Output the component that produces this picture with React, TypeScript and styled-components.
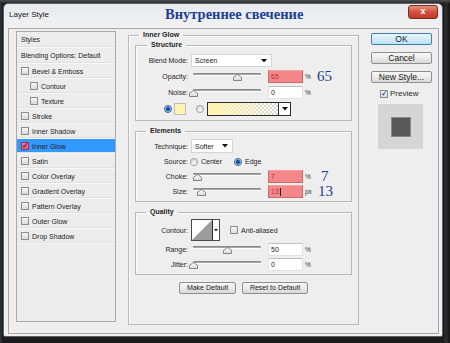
import styled, { createGlobalStyle } from "styled-components";

const GlobalStyle = createGlobalStyle`
	html, body { margin: 0; padding: 0; }
	body {
		background: #161616;
		font-family: "Liberation Sans", Arial, sans-serif;
		color: #1e1e1e;
	}
`;

const Backdrop = styled.div`
	width: 450px;
	height: 343px;
	box-sizing: border-box;
	padding: 3px 0 0 3px;
	overflow: hidden;
	background:
		linear-gradient(#4e4e4e, #2c2c2c 3px, transparent 3px),
		linear-gradient(90deg, #2b3844 0, #1b1b1b 3px, #1b1b1b 443px, #2e2e2e 446px, #141414);
`;

const Window = styled.div`
	width: 440px;
	height: 334px;
	box-sizing: border-box;
	border: 1px solid #5d6169;
	border-radius: 5px 5px 2px 2px;
	background: linear-gradient(#e7eaee, #f1f1f1 24px);
	display: flex;
	flex-direction: column;
`;

const TitleBar = styled.div`
	height: 24px;
	box-sizing: border-box;
	flex: none;
	display: grid;
	grid-template-columns: 156px 1fr auto;
	align-items: center;
	padding: 0 4px 4px 5px;
`;

const Caption = styled.span`
	font-size: 8px;
	color: #1a1a1a;
`;

const Heading = styled.h1`
	margin: 0;
	font-family: "Liberation Serif", "DejaVu Serif", serif;
	font-weight: bold;
	font-size: 14.5px;
	color: #1c3f94;
	line-height: 1;
`;

const CloseButton = styled.div`
	align-self: start;
	margin-top: 1px;
	width: 30px;
	height: 14px;
	box-sizing: border-box;
	border: 1px solid #7a2a22;
	border-radius: 3px;
	background: linear-gradient(#e8907f, #d1513f 50%, #c03a2a);
	color: #fff;
	font-weight: bold;
	font-size: 9px;
	line-height: 11px;
	text-align: center;
`;

const Body = styled.div`
	height: 306px;
	box-sizing: border-box;
	margin: 0 3px 0 4px;
	border: 1px solid #a8a8a8;
	background: #eeeeee;
	display: flex;
	align-items: flex-start;
`;

const StylesPanel = styled.div`
	margin: 2px 0 0 7px;
	width: 100px;
	height: 291px;
	box-sizing: border-box;
	border: 1px solid #a9a9a9;
	background: #ececec;
	display: flex;
	flex-direction: column;
	font-size: 7px;
`;

const StyleRow = styled.div<{ $h: number; $indent: number; $active?: boolean }>`
	height: ${(p) => p.$h}px;
	box-sizing: border-box;
	display: flex;
	align-items: center;
	gap: 3px;
	padding-left: ${(p) => p.$indent}px;
	border-bottom: 1px solid #f8f8f8;
	box-shadow: inset 0 -1px 0 #e0e0e0;
	background: ${(p) => (p.$active ? "#3399ff" : "transparent")};
	color: #222;
	white-space: nowrap;
`;

const Check = styled.span<{ $on?: boolean; $tone?: "pink" | "plain" }>`
	width: 8px;
	height: 8px;
	box-sizing: border-box;
	flex: none;
	border: 1px solid ${(p) => (p.$tone === "pink" ? "#8d3b78" : "#8e8e8e")};
	background: ${(p) =>
		p.$tone === "pink" ? "linear-gradient(#f37a93, #df5274)" : "linear-gradient(#f6f6f6, #dadada)"};
	color: ${(p) => (p.$tone === "pink" ? "#7d1030" : "#2a64b8")};
	font-size: 8px;
	line-height: 6px;
	text-align: center;
	font-weight: bold;
`;

const Middle = styled.fieldset`
	margin: 2px 0 0 12px;
	width: 231px;
	box-sizing: border-box;
	min-width: 0;
	padding: 2px 6px 30px;
	border: 1px solid #b9b9b9;
	box-shadow: inset 1px 1px 0 #fbfbfb;
	display: flex;
	flex-direction: column;
	gap: 6px;
`;

const Group = styled.fieldset<{ $pad: string; $gap: number }>`
	margin: 0;
	min-width: 0;
	padding: ${(p) => p.$pad};
	border: 1px solid #b9b9b9;
	box-shadow: inset 1px 1px 0 #fbfbfb;
	display: flex;
	flex-direction: column;
	gap: ${(p) => p.$gap}px;
`;

const Legend = styled.legend<{ $inset: number }>`
	margin-left: ${(p) => p.$inset}px;
	padding: 0 4px;
	font-size: 7px;
	line-height: 8px;
	font-weight: bold;
	color: #1e1e1e;
`;

const Row = styled.div<{ $h: number; $lead?: number }>`
	height: ${(p) => p.$h}px;
	display: flex;
	align-items: center;
	padding-left: ${(p) => p.$lead ?? 0}px;
	font-size: 7px;
	white-space: nowrap;
`;

const Label = styled.span`
	width: 52px;
	flex: none;
	text-align: right;
	font-size: 7px;
`;

const Select = styled.div<{ $w: number }>`
	margin-left: 3px;
	width: ${(p) => p.$w}px;
	height: 100%;
	box-sizing: border-box;
	border: 1px solid #d4d4d4;
	background: #fff;
	display: flex;
	align-items: center;
	justify-content: space-between;
	padding: 0 4px 0 3px;
`;

const Slider = styled.div`
	position: relative;
	margin-left: 5px;
	width: 68px;
	height: 100%;
	flex: none;
`;

const Track = styled.div`
	margin-top: 3px;
	height: 2px;
	border-radius: 1px;
	background: linear-gradient(#7d7d7d, #b4b4b4);
	border-bottom: 1px solid #fdfdfd;
`;

const Thumb = styled.svg`
	position: absolute;
	top: 4px;
	width: 9px;
	height: 7px;
`;

const ValueBox = styled.div<{ $hot?: boolean }>`
	margin-left: 7px;
	width: 35px;
	height: 100%;
	box-sizing: border-box;
	flex: none;
	border: 1px solid ${(p) => (p.$hot ? "#c86a6c" : "#e2e2e2")};
	border-top-color: ${(p) => (p.$hot ? "#f7a0a2" : "#c0c0c0")};
	background: ${(p) => (p.$hot ? "#f3878a" : "#fff")};
	color: ${(p) => (p.$hot ? "#c0302c" : "#222")};
	padding-left: 2px;
	display: flex;
	align-items: center;
`;

const Caret = styled.span`
	width: 1px;
	height: 8px;
	margin-left: 1px;
	background: #222;
`;

const Unit = styled.span`
	margin-left: 2px;
	width: 12px;
	flex: none;
	font-size: 6.5px;
	color: #333;
`;

const Note = styled.span<{ $shift?: number }>`
	margin-left: ${(p) => p.$shift ?? 0}px;
	font-family: "Liberation Serif", "DejaVu Serif", serif;
	font-size: 15px;
	line-height: 1;
	color: #1b3d8f;
`;

const Radio = styled.span<{ $on?: boolean }>`
	width: 8px;
	height: 8px;
	box-sizing: border-box;
	flex: none;
	border-radius: 50%;
	border: 1px solid ${(p) => (p.$on ? "#3f5f80" : "#9a9a9a")};
	background: ${(p) =>
		p.$on
			? "radial-gradient(circle, #174f9e 0 1.5px, #4d9be0 2.2px, #d3e6f6 3px)"
			: "linear-gradient(#dcdcdc, #fbfbfb)"};
`;

const Choice = styled.span<{ $at: number }>`
	margin-left: ${(p) => p.$at}px;
	display: inline-flex;
	align-items: center;
	gap: 3px;
`;

const Swatch = styled.span`
	margin-left: 2px;
	width: 12px;
	height: 12px;
	box-sizing: border-box;
	border: 1px solid #bdbdbd;
	background: #fdf3b2;
`;

const GradientPicker = styled.div`
	margin-left: 3px;
	width: 84px;
	height: 100%;
	box-sizing: border-box;
	border: 1px solid #2c2c2c;
	display: flex;
`;

const GradientFill = styled.div`
	flex: 1;
	background:
		linear-gradient(90deg, #fff3b0 0%, rgba(255, 243, 176, 0.6) 45%, rgba(255, 243, 176, 0) 100%),
		repeating-conic-gradient(#d6d6d6 0 25%, #ffffff 0 50%) 0 0 / 4px 4px;
`;

const PickerArrow = styled.div<{ $w: number }>`
	width: ${(p) => p.$w}px;
	border-left: 1px solid #2c2c2c;
	background: #fff;
	display: flex;
	align-items: center;
	justify-content: center;
`;

const ContourPicker = styled.div`
	margin-left: 3px;
	height: 22px;
	box-sizing: border-box;
	border: 1px solid #4a4a4a;
	background: #fff;
	display: flex;
`;

const ButtonRow = styled.div`
	margin-top: 1px;
	display: flex;
	justify-content: center;
	gap: 6px;
`;

const Button = styled.div<{ $w: number; $primary?: boolean; $size?: number }>`
	width: ${(p) => p.$w}px;
	height: 12px;
	box-sizing: border-box;
	border: 1px solid ${(p) => (p.$primary ? "#3c7fb1" : "#8f8f8f")};
	border-radius: 2px;
	background: ${(p) =>
		p.$primary ? "linear-gradient(#eaf6fd, #d4ecf9 50%, #bde2f5)" : "linear-gradient(#f7f7f7, #ebebeb 50%, #d8d8d8)"};
	font-size: ${(p) => p.$size ?? 7}px;
	line-height: 10px;
	text-align: center;
	color: #1a1a1a;
	white-space: nowrap;
`;

const Side = styled.div`
	margin: 4px 0 0 12px;
	width: 61px;
	display: flex;
	flex-direction: column;
	gap: 7px;
`;

const PreviewToggle = styled.div`
	margin-top: -1px;
	padding-left: 9px;
	display: flex;
	align-items: center;
	gap: 2px;
	font-size: 8px;
`;

const PreviewBox = styled.div`
	margin: -1px 0 0 7px;
	width: 45px;
	height: 45px;
	background: #d5d5d5;
	display: flex;
	align-items: center;
	justify-content: center;
`;

const PreviewChip = styled.div`
	width: 20px;
	height: 20px;
	box-sizing: border-box;
	border: 1px solid #8a8a8a;
	background: #585858;
`;

const DownCaret = ({ w = 6 }: { w?: number }) => (
	<svg width={w} height={w * 0.6} viewBox="0 0 6 3.6">
		<path d="M0 0h6L3 3.6z" fill="#111" />
	</svg>
);

const SliderControl = ({ value }: { value: number }) => (
	<Slider>
		<Track />
		<Thumb viewBox="0 0 9 7" style={{ left: `calc(${value}% - 4.5px)` }}>
			<defs>
				<linearGradient id="thumbFill" x1="0" y1="0" x2="0" y2="1">
					<stop offset="0" stopColor="#ffffff" />
					<stop offset="1" stopColor="#d8d8d8" />
				</linearGradient>
			</defs>
			<path d="M4.5 0.5 L8.5 3.3 V6.5 H0.5 V3.3 Z" fill="url(#thumbFill)" stroke="#6d6d6d" strokeWidth="0.8" />
		</Thumb>
	</Slider>
);

const styleItems = [
	{ label: "Bevel & Emboss", indent: 4 },
	{ label: "Contour", indent: 13 },
	{ label: "Texture", indent: 13 },
	{ label: "Stroke", indent: 4 },
	{ label: "Inner Shadow", indent: 4 },
	{ label: "Inner Glow", indent: 4, active: true },
	{ label: "Satin", indent: 4 },
	{ label: "Color Overlay", indent: 4 },
	{ label: "Gradient Overlay", indent: 4 },
	{ label: "Pattern Overlay", indent: 4 },
	{ label: "Outer Glow", indent: 4 },
	{ label: "Drop Shadow", indent: 4 },
];

const App = () => {
	return (
		<Backdrop>
			<GlobalStyle />
			<Window>
				<TitleBar>
					<Caption>Layer Style</Caption>
					<Heading>Внутреннее свечение</Heading>
					<CloseButton>x</CloseButton>
				</TitleBar>

				<Body>
					<StylesPanel>
						<StyleRow $h={16} $indent={4}>Styles</StyleRow>
						<StyleRow $h={16} $indent={4}>Blending Options: Default</StyleRow>
						{styleItems.map((item) => (
							<StyleRow key={item.label} $h={15} $indent={item.indent} $active={item.active}>
								<Check $on={item.active} $tone={item.active ? "pink" : "plain"}>
									{item.active ? "✓" : ""}
								</Check>
								{item.label}
							</StyleRow>
						))}
					</StylesPanel>

					<Middle>
						<Legend $inset={4}>Inner Glow</Legend>

						<Group $pad="5px 0 4px" $gap={3}>
							<Legend $inset={11}>Structure</Legend>
							<Row $h={13}>
								<Label>Blend Mode:</Label>
								<Select $w={81}>
									Screen
									<DownCaret />
								</Select>
							</Row>
							<Row $h={13}>
								<Label>Opacity:</Label>
								<SliderControl value={65} />
								<ValueBox $hot>65</ValueBox>
								<Unit>%</Unit>
								<Note>65</Note>
							</Row>
							<Row $h={13}>
								<Label>Noise:</Label>
								<SliderControl value={0} />
								<ValueBox>0</ValueBox>
								<Unit>%</Unit>
							</Row>
							<Row $h={14} $lead={28}>
								<Radio $on />
								<Swatch />
								<Radio style={{ marginLeft: 10 }} />
								<GradientPicker>
									<GradientFill />
									<PickerArrow $w={11}>
										<DownCaret />
									</PickerArrow>
								</GradientPicker>
							</Row>
						</Group>

						<Group $pad="4px 0 3px" $gap={2}>
							<Legend $inset={10}>Elements</Legend>
							<Row $h={14}>
								<Label>Technique:</Label>
								<Select $w={42}>
									Softer
									<DownCaret />
								</Select>
							</Row>
							<Row $h={13}>
								<Label>Source:</Label>
								<Choice $at={2}>
									<Radio />
									Center
								</Choice>
								<Choice $at={12}>
									<Radio $on />
									Edge
								</Choice>
							</Row>
							<Row $h={13}>
								<Label>Choke:</Label>
								<SliderControl value={7} />
								<ValueBox $hot>7</ValueBox>
								<Unit>%</Unit>
								<Note $shift={4}>7</Note>
							</Row>
							<Row $h={13}>
								<Label>Size:</Label>
								<SliderControl value={12} />
								<ValueBox $hot>
									13
									<Caret />
								</ValueBox>
								<Unit>px</Unit>
								<Note $shift={1}>13</Note>
							</Row>
						</Group>

						<Group $pad="3px 0 3px" $gap={2}>
							<Legend $inset={10}>Quality</Legend>
							<Row $h={22}>
								<Label>Contour:</Label>
								<ContourPicker>
									<svg width="20" height="20" viewBox="0 0 20 20">
										<polygon points="0,20 20,0 20,20" fill="#9c9c9c" />
									</svg>
									<PickerArrow $w={6}>
										<DownCaret w={4} />
									</PickerArrow>
								</ContourPicker>
								<Choice $at={10}>
									<Check />
									Anti-aliased
								</Choice>
							</Row>
							<Row $h={13}>
								<Label>Range:</Label>
								<SliderControl value={50} />
								<ValueBox>50</ValueBox>
								<Unit>%</Unit>
							</Row>
							<Row $h={13}>
								<Label>Jitter:</Label>
								<SliderControl value={0} />
								<ValueBox>0</ValueBox>
								<Unit>%</Unit>
							</Row>
						</Group>

						<ButtonRow>
							<Button $w={57}>Make Default</Button>
							<Button $w={66}>Reset to Default</Button>
						</ButtonRow>
					</Middle>

					<Side>
						<Button $w={61} $primary $size={8.5}>OK</Button>
						<Button $w={61} $size={8.5}>Cancel</Button>
						<Button $w={61} $size={8.5}>New Style...</Button>
						<PreviewToggle>
							<Check $on>✓</Check>
							Preview
						</PreviewToggle>
						<PreviewBox>
							<PreviewChip />
						</PreviewBox>
					</Side>
				</Body>
			</Window>
		</Backdrop>
	);
};

export default App;
